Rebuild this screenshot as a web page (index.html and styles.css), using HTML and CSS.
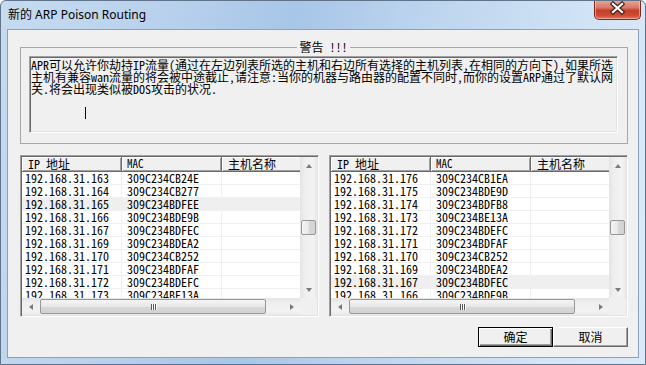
FILE: index.html
```html
<!DOCTYPE html>
<html lang="zh-CN">

<head>
    <meta charset="UTF-8">
    <title>新的 ARP Poison Routing</title>
    <link rel="stylesheet" href="styles.css">
</head>

<body>
    <div class="window">
        <div class="titlebar">
            <span class="title">新的 ARP Poison Routing</span>
            <div class="close">
                <svg width="47" height="20" viewBox="0 0 47 20">
                    <path d="M19 5 L28 13 M28 5 L19 13" stroke="#40231d" stroke-width="4.5" stroke-linecap="square" fill="none" />
                    <path d="M19 5 L28 13 M28 5 L19 13" stroke="#ffffff" stroke-width="2.2" stroke-linecap="square" fill="none" />
                </svg>
            </div>
        </div>

        <div class="client">
            <fieldset class="group">
                <legend>警告 !!!</legend>
                <div class="edit">
                    <div class="line">APR可以允许你劫持IP流量(通过在左边列表所选的主机和右边所有选择的主机列表,在相同的方向下),如果所选</div>
                    <div class="line">主机有兼容wan流量的将会被中途截止,请注意:当你的机器与路由器的配置不同时,而你的设置ARP通过了默认网</div>
                    <div class="line">关.将会出现类似被DOS攻击的状况.</div>
                    <div class="caret"></div>
                </div>
            </fieldset>

            <div class="lists">
                <!-- 左边列表 -->
                <div class="list">
                    <div class="view">
                        <div class="head">
                            <div class="hd ip">IP 地址</div>
                            <div class="hd mac">MAC</div>
                            <div class="hd name">主机名称</div>
                        </div>
                        <div class="row"><div class="c ip">192.168.31.163</div><div class="c mac">309C234CB24E</div><div class="c name"></div></div>
                        <div class="row"><div class="c ip">192.168.31.164</div><div class="c mac">309C234CB277</div><div class="c name"></div></div>
                        <div class="row hot"><div class="c ip">192.168.31.165</div><div class="c mac">309C234BDFEE</div><div class="c name"></div></div>
                        <div class="row"><div class="c ip">192.168.31.166</div><div class="c mac">309C234BDE9B</div><div class="c name"></div></div>
                        <div class="row"><div class="c ip">192.168.31.167</div><div class="c mac">309C234BDFEC</div><div class="c name"></div></div>
                        <div class="row"><div class="c ip">192.168.31.169</div><div class="c mac">309C234BDEA2</div><div class="c name"></div></div>
                        <div class="row"><div class="c ip">192.168.31.170</div><div class="c mac">309C234CB252</div><div class="c name"></div></div>
                        <div class="row"><div class="c ip">192.168.31.171</div><div class="c mac">309C234BDFAF</div><div class="c name"></div></div>
                        <div class="row"><div class="c ip">192.168.31.172</div><div class="c mac">309C234BDEFC</div><div class="c name"></div></div>
                        <div class="row"><div class="c ip">192.168.31.173</div><div class="c mac">309C234BE13A</div><div class="c name"></div></div>
                    </div>
                    <div class="vscroll">
                        <div class="sbtn up"></div>
                        <div class="track"><div class="thumb"></div></div>
                        <div class="sbtn down"></div>
                    </div>
                    <div class="hscroll">
                        <div class="sbtn left"></div>
                        <div class="track"><div class="thumb"></div></div>
                        <div class="sbtn right"></div>
                    </div>
                    <div class="corner"></div>
                </div>

                <!-- 右边列表 -->
                <div class="list">
                    <div class="view">
                        <div class="head">
                            <div class="hd ip">IP 地址</div>
                            <div class="hd mac">MAC</div>
                            <div class="hd name">主机名称</div>
                        </div>
                        <div class="row"><div class="c ip">192.168.31.176</div><div class="c mac">309C234CB1EA</div><div class="c name"></div></div>
                        <div class="row"><div class="c ip">192.168.31.175</div><div class="c mac">309C234BDE9D</div><div class="c name"></div></div>
                        <div class="row"><div class="c ip">192.168.31.174</div><div class="c mac">309C234BDFB8</div><div class="c name"></div></div>
                        <div class="row"><div class="c ip">192.168.31.173</div><div class="c mac">309C234BE13A</div><div class="c name"></div></div>
                        <div class="row"><div class="c ip">192.168.31.172</div><div class="c mac">309C234BDEFC</div><div class="c name"></div></div>
                        <div class="row"><div class="c ip">192.168.31.171</div><div class="c mac">309C234BDFAF</div><div class="c name"></div></div>
                        <div class="row"><div class="c ip">192.168.31.170</div><div class="c mac">309C234CB252</div><div class="c name"></div></div>
                        <div class="row"><div class="c ip">192.168.31.169</div><div class="c mac">309C234BDEA2</div><div class="c name"></div></div>
                        <div class="row hot"><div class="c ip">192.168.31.167</div><div class="c mac">309C234BDFEC</div><div class="c name"></div></div>
                        <div class="row"><div class="c ip">192.168.31.166</div><div class="c mac">309C234BDE9B</div><div class="c name"></div></div>
                    </div>
                    <div class="vscroll">
                        <div class="sbtn up"></div>
                        <div class="track"><div class="thumb"></div></div>
                        <div class="sbtn down"></div>
                    </div>
                    <div class="hscroll">
                        <div class="sbtn left"></div>
                        <div class="track"><div class="thumb"></div></div>
                        <div class="sbtn right"></div>
                    </div>
                    <div class="corner"></div>
                </div>
            </div>

            <div class="buttons">
                <div class="btn default">确定</div>
                <div class="btn">取消</div>
            </div>
        </div>
    </div>
</body>

</html>
```

FILE: styles.css
```css
* {
    margin: 0;
    padding: 0;
    box-sizing: border-box;
}

body {
    background: #fff;
    color: #000;
    font-family: "Noto Sans Mono CJK SC", "Noto Sans CJK SC", "Liberation Mono", monospace;
    font-size: 12px;
}

/* 窗口外框 */
.window {
    width: 646px;
    height: 365px;
    display: flex;
    flex-direction: column;
    border: 1px solid #5f738b;
    border-radius: 6px 6px 0 0;
    overflow: hidden;
    background: linear-gradient(100deg, #c6dbf0 0%, #b7d0ec 25%, #a8c6e7 42%, #bcd4ee 60%, #d3e4f6 85%, #dceaf8 100%);
}

.titlebar {
    height: 28px;
    display: flex;
    justify-content: space-between;
    align-items: flex-start;
    padding-left: 7px;
}

.title {
    font-family: "Noto Sans", "Noto Sans CJK SC", sans-serif;
    font-size: 12px;
    line-height: 27px;
    color: #000;
}

.close {
    width: 47px;
    height: 20px;
    margin-right: 4px;
    margin-top: -1px;
    border: 1px solid #7a2a1e;
    border-top: none;
    border-radius: 0 0 5px 5px;
    background: linear-gradient(#e8a898 0%, #d9786a 40%, #c53f2a 55%, #cc4b33 80%, #e0775c 100%);
    box-shadow: inset 0 0 0 1px rgba(255, 220, 210, 0.5);
}

.close svg {
    display: block;
    margin: -1px 0 0 -1px;
}

/* 客户区 */
.client {
    flex: 1;
    margin: 0 6px 6px;
    border: 1px solid #8ba1bb;
    background: #f0f0f0;
    padding: 10px 10px 0 12px;
    display: flex;
    flex-direction: column;
}

.group {
    border: 1px solid #a7a7a7;
    padding: 2px 9px 10px 8px;
    min-width: 0;
}

.group legend {
    margin: 0 auto;
    padding: 0 2px;
    font-size: 12px;
    line-height: 14px;
}

.edit {
    height: 77px;
    border: 1px solid;
    border-color: #a0a0a0 #fff #fff #a0a0a0;
    box-shadow: inset 1px 1px #696969, inset -1px -1px #e3e3e3;
    padding: 2px 0 0 1px;
    background: #f0f0f0;
}

.line {
    line-height: 12px;
    white-space: nowrap;
}

.caret {
    width: 1px;
    height: 12px;
    margin: 12px 0 0 54px;
    background: #000;
}

/* 两个列表 */
.lists {
    display: flex;
    gap: 10px;
    margin-top: 11px;
}

.list {
    flex: 1;
    height: 162px;
    display: grid;
    grid-template-columns: 1fr 17px;
    grid-template-rows: 1fr 17px;
    border: 1px solid;
    border-color: #a0a0a0 #fff #fff #a0a0a0;
    box-shadow: inset 1px 1px #696969, inset -1px -1px #e3e3e3;
    padding: 1px;
    background: #fff;
}

.view {
    overflow: hidden;
    min-width: 0;
    background: #fff;
}

.head {
    display: flex;
    height: 15px;
}

.hd {
    flex-shrink: 0;
    height: 15px;
    line-height: 13px;
    padding-left: 6px;
    background: #f0f0f0;
    border-right: 1px solid #696969;
    border-bottom: 1px solid #696969;
    box-shadow: inset 1px 1px #fff, inset -1px -1px #a0a0a0;
    white-space: nowrap;
}

.hd.mac {
    font-size: 11px;
    padding-left: 5px;
}

.ip {
    width: 100px;
}

.mac {
    width: 100px;
}

.name {
    width: 80px;
}

.row {
    display: flex;
    height: 13px;
    border-bottom: 1px solid #f0f0f0;
}

.row.hot {
    background: #efefef;
}

.c {
    flex-shrink: 0;
    line-height: 12px;
    border-right: 1px solid #f0f0f0;
    white-space: nowrap;
}

.c.ip {
    padding-left: 3px;
}

.c.mac {
    padding-left: 5px;
}

/* 滚动条 */
.vscroll {
    display: flex;
    flex-direction: column;
    background: linear-gradient(to right, #e3e3e3, #eeeeee 25%, #f3f3f3 75%, #e8e8e8);
}

.hscroll {
    display: flex;
    background: linear-gradient(#e3e3e3, #eeeeee 25%, #f3f3f3 75%, #e8e8e8);
}

.corner {
    background: #f0f0f0;
}

.sbtn {
    width: 17px;
    height: 17px;
    flex-shrink: 0;
    display: flex;
    align-items: center;
    justify-content: center;
}

.sbtn::after {
    content: '';
    border: 4px solid transparent;
}

.sbtn.up::after {
    border-top: none;
    border-bottom-color: #7a7a7a;
    border-width: 0 3.5px 4px;
}

.sbtn.down::after {
    border-bottom: none;
    border-top-color: #7a7a7a;
    border-width: 4px 3.5px 0;
}

.sbtn.left::after {
    border-left: none;
    border-right-color: #7a7a7a;
    border-width: 3.5px 4px 3.5px 0;
}

.sbtn.right::after {
    border-right: none;
    border-left-color: #7a7a7a;
    border-width: 3.5px 0 3.5px 4px;
}

.track {
    flex: 1;
}

.thumb {
    border: 1px solid #979797;
    border-radius: 2px;
}

.vscroll .thumb {
    width: 15px;
    height: 15px;
    margin: 46px 0 0 1px;
    background: linear-gradient(to right, #f5f5f5, #e8e8e8 50%, #d8d8d8 51%, #d2d2d2);
}

.hscroll .thumb {
    width: 226px;
    height: 15px;
    margin: 1px 0 0 1px;
    background: linear-gradient(#f5f5f5, #e8e8e8 50%, #d8d8d8 51%, #d2d2d2);
    display: flex;
    align-items: center;
    justify-content: center;
}

/* 滑块中间的三条竖线 */
.hscroll .thumb::after {
    content: '';
    width: 1px;
    height: 6px;
    background: #595959;
    box-shadow: 2px 0 #595959, -2px 0 #595959, 3px 0 #fff, 1px 0 #fff, -1px 0 #fff;
}

/* 按钮 */
.buttons {
    display: flex;
    justify-content: flex-end;
    margin-top: 10px;
}

.btn {
    width: 75px;
    height: 20px;
    line-height: 18px;
    text-align: center;
    background: #f0f0f0;
    border: 1px solid;
    border-color: #fff #696969 #696969 #fff;
    box-shadow: inset -1px -1px #a0a0a0;
}

.btn.default {
    border-color: #000;
    box-shadow: inset 1px 1px #fff, inset -1px -1px #696969, inset -2px -2px #a0a0a0;
}
```
